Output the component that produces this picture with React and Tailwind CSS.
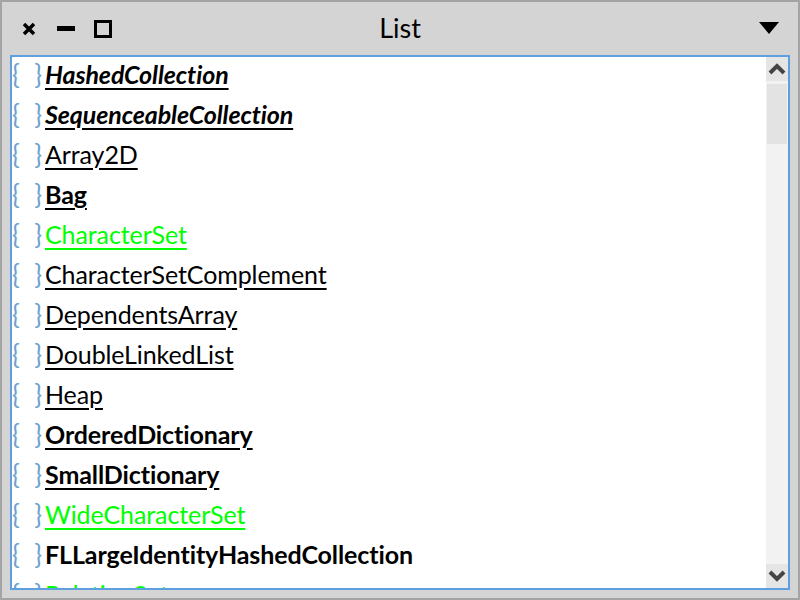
import React from "react"

const rows = [
    { name: "HashedCollection", cls: "font-bold italic text-black" },
    { name: "SequenceableCollection", cls: "font-bold italic text-black" },
    { name: "Array2D", cls: "text-black" },
    { name: "Bag", cls: "font-bold text-black" },
    { name: "CharacterSet", cls: "text-[#00ff00]" },
    { name: "CharacterSetComplement", cls: "text-black" },
    { name: "DependentsArray", cls: "text-black" },
    { name: "DoubleLinkedList", cls: "text-black" },
    { name: "Heap", cls: "text-black" },
    { name: "OrderedDictionary", cls: "font-bold text-black" },
    { name: "SmallDictionary", cls: "font-bold text-black" },
    { name: "WideCharacterSet", cls: "text-[#00ff00]" },
    { name: "FLLargeIdentityHashedCollection", cls: "font-bold text-black", plain: true },
    { name: "RelationSet", cls: "text-[#00ff00]" },
]

const Chevron = ({ up }) => (
    <svg width="18" height="12" viewBox="0 0 18 12">
        <polyline
            points={up ? "2,10 9,3 16,10" : "2,2 9,9 16,2"}
            fill="none"
            stroke="#454545"
            strokeWidth="4"
        />
    </svg>
)

const App = () => {
    return (
        <div className="w-[800px] h-[600px] bg-[#a4a4a4] p-[2px] overflow-hidden" style={{ fontFamily: "Lato, 'Liberation Sans', sans-serif" }}>
            <div className="w-full h-full bg-[#d4d4d4] flex flex-col">

                {/* TITLE BAR */}
                <div className="h-[53px] flex items-center relative shrink-0">
                    <div className="flex items-center pl-[20px]">
                        <svg width="14" height="14" viewBox="0 0 14 14" className="mt-[1px]">
                            <path d="M2 2 L12 12 M12 2 L2 12" stroke="#000" strokeWidth="3.5" />
                        </svg>
                        <div className="w-[18px] h-[5px] bg-black ml-[21px]" />
                        <div className="w-[18px] h-[18px] border-[3px] border-black ml-[19px]" />
                    </div>
                    <div className="absolute left-0 right-0 text-center text-[27px] text-black leading-none top-[12px]">
                        List
                    </div>
                    <svg width="20" height="12" viewBox="0 0 20 12" className="absolute left-[757px] top-[20px]">
                        <polygon points="0,0 20,0 10,12" fill="#000" />
                    </svg>
                </div>

                {/* LIST */}
                <div className="mx-[8px] h-[535px] border-2 border-[#5e9fe0] bg-white flex overflow-hidden">
                    <div className="flex-1 overflow-hidden">
                        {rows.map((r) => (
                            <div key={r.name} className="h-[40px] flex items-center pb-[6px] whitespace-nowrap">
                                <span className="text-[26px] text-[#6ea3cd] w-[33px] leading-none flex justify-between pr-[3px]">
                                    <span>{"{"}</span>
                                    <span>{"}"}</span>
                                </span>
                                <span className={`text-[25px] leading-none tracking-[-0.1px] ${r.plain ? "" : "underline decoration-2 underline-offset-[4px]"} ${r.cls}`}>
                                    {r.name}
                                </span>
                            </div>
                        ))}
                    </div>

                    {/* SCROLLBAR */}
                    <div className="w-[22px] bg-[#f2f2f2] flex flex-col shrink-0">
                        <div className="h-[24px] bg-[#e5e5e5] flex items-center justify-center">
                            <Chevron up />
                        </div>
                        <div className="h-[60px] mt-[3px] mx-[1px] bg-[#e3e3e3]" />
                        <div className="flex-1" />
                        <div className="h-[24px] bg-[#e5e5e5] flex items-center justify-center">
                            <Chevron />
                        </div>
                    </div>
                </div>
            </div>
        </div>
    )
}

export default App
